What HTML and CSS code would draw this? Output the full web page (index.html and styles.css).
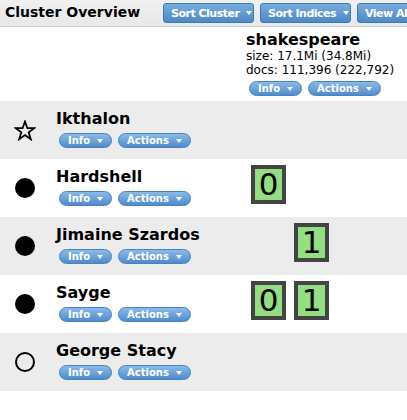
FILE: index.html
```html
<!DOCTYPE html>
<html>
<head>
<meta charset="utf-8">
<link rel="stylesheet" href="styles.css">
</head>
<body>
<div class="topbar">
  <div class="title">Cluster Overview</div>
  <div class="tbtn">Sort Cluster <span class="caret"></span></div>
  <div class="tbtn">Sort Indices <span class="caret"></span></div>
  <div class="tbtn">View Aliases <span class="caret"></span></div>
</div>

<div class="row head">
  <div class="icon"></div>
  <div class="node"></div>
  <div class="index">
    <div class="iname">shakespeare</div>
    <div class="meta">size: 17.1Mi (34.8Mi)</div>
    <div class="meta">docs: 111,396 (222,792)</div>
    <div class="btns"><span class="pill">Info <span class="caret"></span></span><span class="pill">Actions <span class="caret"></span></span></div>
  </div>
</div>

<div class="row alt">
  <div class="icon"><svg width="22" height="21" viewBox="0 0 22 21"><polygon points="11,1.5 13.4,8.2 20.3,8.2 14.7,12.4 16.8,19.2 11,15 5.2,19.2 7.3,12.4 1.7,8.2 8.6,8.2" fill="none" stroke="#000" stroke-width="1.8" stroke-linejoin="miter"/></svg></div>
  <div class="node">
    <div class="nname">Ikthalon</div>
    <div class="btns"><span class="pill">Info <span class="caret"></span></span><span class="pill">Actions <span class="caret"></span></span></div>
  </div>
  <div class="index"></div>
</div>

<div class="row">
  <div class="icon"><span class="dot"></span></div>
  <div class="node">
    <div class="nname">Hardshell</div>
    <div class="btns"><span class="pill">Info <span class="caret"></span></span><span class="pill">Actions <span class="caret"></span></span></div>
  </div>
  <div class="index"><div class="shards"><div class="shard s0">0</div></div></div>
</div>

<div class="row alt">
  <div class="icon"><span class="dot"></span></div>
  <div class="node">
    <div class="nname">Jimaine Szardos</div>
    <div class="btns"><span class="pill">Info <span class="caret"></span></span><span class="pill">Actions <span class="caret"></span></span></div>
  </div>
  <div class="index"><div class="shards"><div class="shard s1">1</div></div></div>
</div>

<div class="row">
  <div class="icon"><span class="dot"></span></div>
  <div class="node">
    <div class="nname">Sayge</div>
    <div class="btns"><span class="pill">Info <span class="caret"></span></span><span class="pill">Actions <span class="caret"></span></span></div>
  </div>
  <div class="index"><div class="shards"><div class="shard s0">0</div><div class="shard s1">1</div></div></div>
</div>

<div class="row alt">
  <div class="icon"><span class="ring"></span></div>
  <div class="node">
    <div class="nname">George Stacy</div>
    <div class="btns"><span class="pill">Info <span class="caret"></span></span><span class="pill">Actions <span class="caret"></span></span></div>
  </div>
  <div class="index"></div>
</div>
</body>
</html>
```

FILE: styles.css
```css
html, body {
  margin: 0;
  padding: 0;
  background: #fff;
  font-family: "DejaVu Sans", Verdana, sans-serif;
  color: #000;
  overflow: hidden;
}

.topbar {
  display: flex;
  align-items: flex-start;
  height: 26px;
  border-bottom: 1px solid #cfcfcf;
  background: linear-gradient(#f0f0f0, #e8e8e8);
  padding-left: 5px;
  white-space: nowrap;
  overflow: hidden;
}

.title {
  font-weight: bold;
  font-size: 14px;
  line-height: 16px;
  margin-top: 4px;
  width: 158px;
  flex: none;
}

.tbtn {
  flex: none;
  display: flex;
  align-items: center;
  gap: 7px;
  box-sizing: border-box;
  width: 91px;
  height: 20px;
  margin-top: 3px;
  margin-right: 6px;
  padding-left: 7px;
  border: 1px solid #3f7ab6;
  border-radius: 3px;
  background: linear-gradient(#78addf, #4c89c7);
  color: #fff;
  font-weight: bold;
  font-size: 11px;
  letter-spacing: -0.5px;
}

.caret {
  display: inline-block;
  width: 0;
  height: 0;
  border-left: 3.5px solid transparent;
  border-right: 3.5px solid transparent;
  border-top: 4px solid #fff;
}

.row {
  display: grid;
  grid-template-columns: 50px 196px 1fr;
  height: 58px;
}

.row.head {
  height: 74px;
}

.row.alt {
  background: #ececec;
}

.icon {
  display: flex;
  align-items: center;
  justify-content: center;
}

.dot {
  width: 20px;
  height: 20px;
  border-radius: 50%;
  background: #000;
}

.ring {
  box-sizing: border-box;
  width: 20px;
  height: 20px;
  border-radius: 50%;
  border: 2.5px solid #000;
}

.node {
  padding: 9px 0 0 6px;
}

.nname {
  font-weight: bold;
  font-size: 16px;
  line-height: 18px;
  white-space: nowrap;
}

.btns {
  display: flex;
  gap: 6px;
  margin-top: 5px;
  margin-left: 3px;
}

.pill {
  display: flex;
  align-items: center;
  gap: 7px;
  box-sizing: border-box;
  height: 15px;
  padding: 0 8px;
  border: 1px solid #4682c0;
  border-radius: 8px;
  background: linear-gradient(#8abbe8, #4f8ccb);
  color: #fff;
  font-weight: bold;
  font-size: 10px;
}

.index {
  padding-top: 4px;
}

.iname {
  font-weight: bold;
  font-size: 16px;
  line-height: 18px;
}

.meta {
  font-size: 12px;
  line-height: 14px;
  white-space: nowrap;
}

.head .btns {
  margin-top: 4px;
}

.row:not(.head) .index {
  padding-top: 6px;
}

.shards {
  display: grid;
  grid-template-columns: 35px 35px;
  column-gap: 8px;
  margin-left: 5px;
}

.shard {
  box-sizing: border-box;
  width: 35px;
  height: 39px;
  border: 4px solid #444;
  background: #92de80;
  font-size: 31px;
  line-height: 31px;
  text-align: center;
}

.s0 { grid-column: 1; }
.s1 { grid-column: 2; }
```
